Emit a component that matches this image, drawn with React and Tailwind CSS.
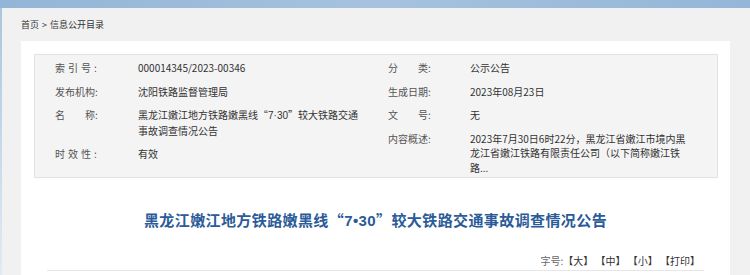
export default function App() {
  const font = { fontFamily: '"Noto Sans CJK SC", "Microsoft YaHei", sans-serif' };
  return (
    <div className="w-[750px] h-[275px] overflow-hidden bg-[#f1f1f1]" style={font}>
      <div className="h-[8px] bg-gradient-to-r from-[#93b5d7] via-[#a6c2de] to-[#94b6d8]"></div>
      <div className="flex">
        <div className="w-[2px] h-[267px] bg-gradient-to-b from-[#a9c5e0] to-[#e3ebf3]"></div>
        <div className="flex-1 pl-[19px]">
          <div className="h-[33px] flex items-center text-[9px] text-[#333]">
            <span>首页</span>
            <span className="mx-[3px]">&gt;</span>
            <span>信息公开目录</span>
          </div>
          <div className="w-[709px] bg-white pt-[13px] h-[300px]">
            <div className="ml-[13px] w-[684px] bg-[#f4f4f4] border border-[#e3e3e3] pt-[6px] pb-[2px] flex text-[10px] leading-[14.5px]">
              <div className="w-[341px] flex flex-col gap-[9px]">
                <div className="flex">
                  <div className="w-[103px] pl-[20px] text-[#555] tracking-[3px]">索引号:</div>
                  <div className="text-[#333]">000014345/2023-00346</div>
                </div>
                <div className="flex">
                  <div className="w-[103px] pl-[20px] text-[#555]">发布机构:</div>
                  <div className="text-[#333]">沈阳铁路监督管理局</div>
                </div>
                <div className="flex">
                  <div className="w-[103px] pl-[20px] text-[#555]">名　　称:</div>
                  <div className="text-[#333]">
                    <div>
                      黑龙江嫩江地方铁路嫩黑线“<span className="font-['Liberation_Sans',sans-serif]">7·30</span>”较大铁路交通
                    </div>
                    <div>事故调查情况公告</div>
                  </div>
                </div>
                <div className="flex">
                  <div className="w-[103px] pl-[20px] text-[#555] tracking-[3px]">时效性:</div>
                  <div className="text-[#333]">有效</div>
                </div>
              </div>
              <div className="flex-1 flex flex-col gap-[9px]">
                <div className="flex">
                  <div className="w-[94px] pl-[12px] text-[#555]">分　　类:</div>
                  <div className="text-[#333]">公示公告</div>
                </div>
                <div className="flex">
                  <div className="w-[94px] pl-[12px] text-[#555]">生成日期:</div>
                  <div className="text-[#333]">2023年08月23日</div>
                </div>
                <div className="flex">
                  <div className="w-[94px] pl-[12px] text-[#555]">文　　号:</div>
                  <div className="text-[#333]">无</div>
                </div>
                <div className="flex">
                  <div className="w-[94px] pl-[12px] text-[#555]">内容概述:</div>
                  <div className="text-[#333]">
                    <div>2023年7月30日6时22分，黑龙江省嫩江市境内黑</div>
                    <div>龙江省嫩江铁路有限责任公司（以下简称嫩江铁</div>
                    <div>路...</div>
                  </div>
                </div>
              </div>
            </div>
            <h1 className="mt-[32px] text-center text-[15px] leading-[20px] font-bold tracking-[0.4px] text-[#2b5b98]">
              黑龙江嫩江地方铁路嫩黑线“<span className="font-['Liberation_Sans',sans-serif]">7•30</span>”较大铁路交通事故调查情况公告
            </h1>
            <div className="mx-[26px] mt-[23px] pb-[2px] pr-[4px] border-b border-[#e6e6e6] flex justify-end text-[10px] leading-[14px] whitespace-pre">
              <span className="text-[#666]">字号:</span>
              <span className="text-[#333]">{"【大】 【中】 【小】 【打印】"}</span>
            </div>
          </div>
        </div>
      </div>
    </div>
  );
}
